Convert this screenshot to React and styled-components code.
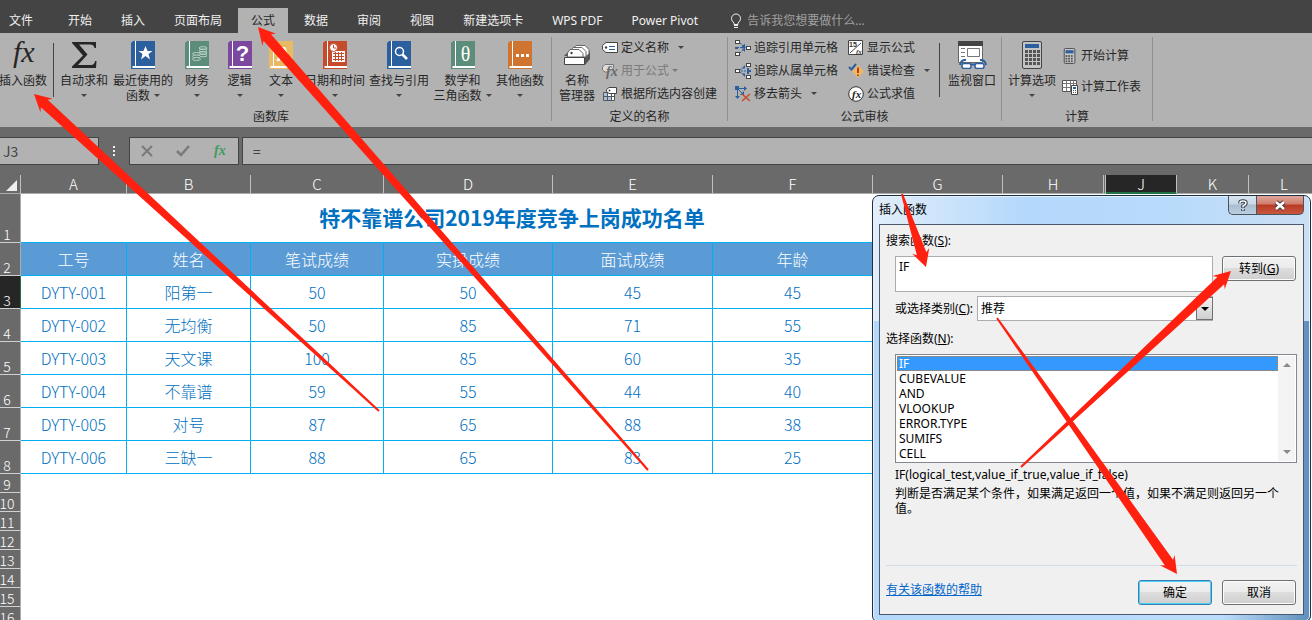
import React, { useState } from "react";
import styled, { createGlobalStyle, css } from "styled-components";

const GlobalStyle = createGlobalStyle`
  * {
    box-sizing: border-box;
  }

  html, body, #root {
    height: 100%;
  }

  body {
    margin: 0;
    overflow: hidden;
    background: #fff;
    font-family: "Noto Sans", "Noto Sans CJK SC", sans-serif;
    font-size: 12px;
    color: #262626;
  }

  button, input, textarea, select {
    margin: 0;
    font: inherit;
    color: inherit;
  }
`;

const Page = styled.div`
  position: relative;
  display: flex;
  flex-direction: column;
  height: 100%;
  overflow: hidden;
`;

/* ---------- tabs ---------- */

const TabBar = styled.nav`
  display: flex;
  align-items: flex-end;
  gap: 3px;
  height: 33px;
  flex: none;
  background: #444;
`;

const Tab = styled.button`
  height: 25px;
  padding: 0 13px;
  border: 0;
  line-height: 21px;
  white-space: nowrap;
  color: ${(p) => (p.$active ? "#262626" : "#f0f0f0")};
  background: ${(p) => (p.$active ? "#b2b2b2" : "transparent")};
`;

const FileTab = styled(Tab)`
  padding: 0 19px 0 9px;
`;

const TellMe = styled.label`
  display: flex;
  align-items: center;
  gap: 5px;
  height: 25px;
  margin-left: 16px;
`;

const TellInput = styled.input`
  width: 160px;
  padding: 0;
  border: 0;
  outline: 0;
  background: transparent;
  color: #f0f0f0;

  &::placeholder {
    color: #a0a0a0;
    opacity: 1;
  }
`;

/* ---------- ribbon ---------- */

const RibbonBar = styled.div`
  display: flex;
  flex: none;
  height: 94px;
  padding: 4px 0 6px;
  background: #b2b2b2;
`;

const Group = styled.section`
  display: flex;
  flex-direction: column;
  flex: none;
  border-right: 1px solid #8f8f8f;
`;

const GroupBody = styled.div`
  display: flex;
  flex: 1;
  padding-right: ${(p) => p.$right || 0}px;
`;

const GroupLabel = styled.div`
  height: 12px;
  padding-right: ${(p) => p.$right || 0}px;
  line-height: 16px;
  text-align: center;
`;

const Divider = styled.div`
  flex: none;
  width: 1px;
  height: 54px;
  margin: 6px 3px 0 ${(p) => p.$before || 0}px;
  background: #444;
`;

const BigButton = styled.button`
  display: flex;
  flex-direction: column;
  align-items: center;
  flex: none;
  width: ${(p) => p.$width}px;
  padding: 4px 0 0;
  border: 0;
  background: transparent;
  line-height: 15px;
  white-space: nowrap;

  svg {
    flex: none;
    margin-bottom: 4px;
  }
`;

const BigLine = styled.span`
  display: flex;
  align-items: center;
  gap: 4px;
  height: 15px;
`;

const Caret = styled.i`
  border: 3px solid transparent;
  border-top-color: #444;
  border-bottom: 0;
`;

const SmallColumn = styled.div`
  display: flex;
  flex-direction: column;
  margin-top: -1px;
  padding-left: ${(p) => p.$left || 0}px;
  padding-top: ${(p) => p.$top || 0}px;
  width: ${(p) => p.$width}px;
`;

const SmallButton = styled.button`
  display: flex;
  align-items: center;
  gap: 3px;
  height: ${(p) => p.$height || 23}px;
  padding: 0;
  border: 0;
  background: transparent;
  line-height: 16px;
  white-space: nowrap;
  color: ${(p) => (p.disabled ? "#7a7a7a" : "#262626")};

  svg {
    flex: none;
  }

  ${Caret} {
    margin-left: ${(p) => (p.disabled ? 0 : 6)}px;
    border-top-color: ${(p) => (p.disabled ? "#7a7a7a" : "#444")};
  }
`;

/* ---------- formula bar ---------- */

const FormulaBar = styled.div`
  display: flex;
  flex: none;
  height: 48px;
  padding: 10px 0;
  background: #6a6a6a;
`;

const fieldBox = css`
  border: 1px solid #444;
  background: #b2b2b2;
  font-family: "Noto Sans CJK SC", sans-serif;
  font-size: 14px;
  color: #444;
  outline: 0;
`;

const NameBox = styled.input`
  ${fieldBox}
  width: 99px;
  padding: 0 3px;
  border-left: 0;
`;

const Dots = styled.div`
  display: flex;
  flex-direction: column;
  align-items: center;
  justify-content: center;
  gap: 2px;
  width: 30px;

  i {
    width: 2px;
    height: 2px;
    background: #f0f0f0;
  }
`;

const FormulaTools = styled.div`
  ${fieldBox}
  display: flex;
  align-items: center;
  justify-content: space-around;
  width: 110px;
  margin-right: 3px;
`;

const ToolButton = styled.button`
  display: flex;
  padding: 0;
  border: 0;
  background: transparent;
`;

const FormulaInput = styled.input`
  ${fieldBox}
  flex: 1;
  min-width: 0;
  padding: 0 10px;
  border-right: 0;
`;

/* ---------- sheet ---------- */

const SheetArea = styled.main`
  position: relative;
  flex: 1;
  min-height: 0;
  overflow: hidden;
  background: #fff;
`;

const Sheet = styled.table`
  table-layout: fixed;
  width: 1320px;
  border-collapse: separate;
  border-spacing: 0;
  font-family: "Noto Sans CJK SC", sans-serif;
  font-weight: 300;
  font-size: 16px;
  line-height: 16px;
  white-space: nowrap;
`;

const ColHead = styled.th`
  height: 19px;
  padding: 0;
  font-size: 15px;
  font-weight: 300;
  color: #fff;
  background: ${(p) => (p.$selected ? "#262626" : "#6a6a6a")};
  border-right: 1px solid #c0c0c0;
  border-bottom: 1px solid ${(p) => (p.$selected ? "#217346" : "#ababab")};
  box-shadow: ${(p) => (p.$selected ? "inset 0 -1px #217346" : "none")};
`;

const Corner = styled(ColHead)`
  vertical-align: bottom;

  svg {
    display: block;
    margin: 0 3px 2px auto;
  }
`;

const RowHead = styled.th`
  height: ${(p) => p.$height}px;
  padding: 0;
  vertical-align: bottom;
  font-size: 14px;
  font-weight: 300;
  color: #fff;
  background: ${(p) => (p.$selected ? "#262626" : "#6a6a6a")};
  border-right: 1px solid ${(p) => (p.$selected ? "#217346" : "#ababab")};
  border-bottom: 1px solid #d0d0d0;
`;

const RowNumber = styled.span`
  display: flex;
  justify-content: center;
  width: 14px;
`;

const TitleCell = styled.td`
  padding: 0 0 2px;
  text-align: center;
  font-size: 21px;
  font-weight: 700;
  color: #0070c0;
  border-bottom: 1px solid #00b0f0;
`;

const Cell = styled.td`
  padding: 0;
  text-align: center;
  color: ${(p) => (p.$head ? "#fff" : "#0070c0")};
  background: ${(p) => (p.$head ? "#5b9bd5" : "#fff")};
  border-right: 1px solid #00b0f0;
  border-bottom: 1px solid #00b0f0;
`;

/* ---------- dialog ---------- */

const DialogFrame = styled.form`
  position: absolute;
  top: 195px;
  right: 1px;
  z-index: 2;
  display: flex;
  flex-direction: column;
  width: 439px;
  padding: 0 6px 6px;
  border: 1px solid #1f2e40;
  border-radius: 7px 7px 6px 6px;
  background:
    linear-gradient(90deg, #e2eefa 0, #b4d8fb 35%, #b9dbfb 70%, #cbdff2 100%) top / 100% 125px no-repeat,
    linear-gradient(90deg, #b4d8fb 0, #bcdcfb 80%, #5f8fbd 100%);
  box-shadow: inset 0 0 0 1px #e4f2ff;
  color: #000;
`;

const TitleBar = styled.header`
  display: flex;
  justify-content: space-between;
  height: 28px;
`;

const DialogTitle = styled.h1`
  margin: 0;
  font-size: 12px;
  font-weight: 400;
  line-height: 28px;
`;

const WindowButtons = styled.div`
  display: flex;
  height: 19px;
`;

const WindowButton = styled.button`
  display: flex;
  align-items: center;
  justify-content: center;
  width: ${(p) => (p.$close ? 48 : 28)}px;
  padding: 0;
  border: 1px solid #4a5560;
  border-top: 0;
  border-radius: ${(p) => (p.$close ? "0 0 5px 0" : "0 0 0 5px")};
  border-right-width: ${(p) => (p.$close ? 1 : 0)}px;
  background: ${(p) =>
    p.$close
      ? "linear-gradient(#dfa79b 0, #cf7d6c 45%, #b93a23 50%, #c9573e 100%)"
      : "linear-gradient(#d8e4f0 0, #c8d8e8 45%, #a9bdd1 50%, #bccfe2 100%)"};
`;

const DialogBody = styled.div`
  display: flex;
  flex-direction: column;
  height: 391px;
  padding: 8px 6px 0;
  border: 1px solid #4a5a6c;
  background: #f0f0f0;
`;

const FieldLabel = styled.label`
  display: block;
  line-height: 16px;
`;

const SearchRow = styled.div`
  display: flex;
  align-items: flex-start;
  gap: 9px;
  margin: 7px 0 4px;
  padding: 0 1px 0 9px;
`;

const SearchText = styled.textarea`
  flex: 1;
  height: 36px;
  padding: 2px 3px;
  border: 1px solid #abadb3;
  background: #fff;
  line-height: 16px;
  outline: 0;
  resize: none;
`;

const DialogButton = styled.button`
  width: 74px;
  height: 25px;
  padding: 0;
  border: 1px solid ${(p) => (p.$primary ? "#3c7fb1" : "#707070")};
  border-radius: 3px;
  background: linear-gradient(#f2f2f2 0, #ebebeb 49%, #ddd 50%, #cfcfcf 100%);
  box-shadow: ${(p) => (p.$primary ? "inset 0 0 0 1px #46d0f4" : "inset 0 0 0 1px #fcfcfc")};
  line-height: 21px;
`;

const CategoryRow = styled.div`
  display: flex;
  align-items: center;
  gap: 4px;
  padding: 0 84px 0 9px;
`;

const SelectWrap = styled.div`
  position: relative;
  flex: 1;
`;

const CategorySelect = styled.select`
  display: block;
  width: 100%;
  height: 25px;
  padding: 0 3px;
  appearance: none;
  border: 1px solid #abadb3;
  border-radius: 0;
  background: #fff;
  outline: 0;
`;

const SelectArrow = styled.span`
  position: absolute;
  top: 1px;
  right: 0;
  bottom: 1px;
  display: flex;
  align-items: center;
  justify-content: center;
  width: 17px;
  border: 1px solid #707070;
  background: linear-gradient(#f2f2f2, #cfcfcf);
  pointer-events: none;

  ${Caret} {
    border-width: 4px 4px 0;
    border-top-color: #000;
  }
`;

const ListCaption = styled.div`
  padding-top: 10px;
  line-height: 16px;
`;

const ListFrame = styled.div`
  display: flex;
  height: 109px;
  margin: 7px 0 4px 9px;
  padding: 1px;
  border: 1px solid #828790;
  background: #fff;
`;

const FunctionList = styled.ul`
  flex: 1;
  margin: 0;
  padding: 0;
  list-style: none;
`;

const FunctionItem = styled.li`
  height: 15px;
  padding-left: 1px;
  line-height: 13px;
  border: 1px dotted ${(p) => (p.$selected ? "#d87a20" : "transparent")};
  background: ${(p) => (p.$selected ? "#39f" : "#fff")};
  color: ${(p) => (p.$selected ? "#fff" : "#000")};
`;

const ScrollTrack = styled.div`
  display: flex;
  flex-direction: column;
  align-items: center;
  justify-content: space-between;
  width: 17px;
  padding: 7px 0;
  background: #f4f4f4;
`;

const ScrollArrow = styled.i`
  border: 4px solid transparent;
  ${(p) => (p.$up ? "border-top: 0; border-bottom-color: #8a8a8a;" : "border-bottom: 0; border-top-color: #8a8a8a;")}
`;

const Description = styled.div`
  flex: 1;
  padding: 0 9px;
  line-height: 15px;

  p {
    margin: 0 0 4px;
  }
`;

const DialogFooter = styled.footer`
  display: flex;
  align-items: flex-start;
  gap: 10px;
  height: 49px;
  padding: 14px 1px 0 0;
  border-top: 1px solid #d0dce8;
`;

const HelpLink = styled.a`
  margin-right: auto;
  line-height: 20px;
  color: #06c;
`;

const ArrowLayer = styled.svg`
  position: absolute;
  top: 0;
  left: 0;
  z-index: 3;
  pointer-events: none;
`;

/* ---------- icons ---------- */

const SERIF = "Liberation Serif, serif";

const Book = ({ color, children }) => (
  <svg width="24" height="28" viewBox="0 0 24 28">
    <path d="M2 0H24V28H0V2Z" fill={color} />
    <path d="M4.500 0V25" stroke="#fff" />
    <path d="M1.500 26H24" stroke="#fff" strokeWidth="2" />
    {children}
  </svg>
);

const BookText = ({ children, size, serif }) => (
  <text
    x="14.500"
    y="20"
    textAnchor="middle"
    fontSize={size || 20}
    fontWeight={serif ? 400 : 700}
    fontFamily={serif ? SERIF : "Liberation Sans, sans-serif"}
    fill="#fff"
  >
    {children}
  </text>
);

const FxIcon = () => (
  <svg width="28" height="28" viewBox="0 0 28 28">
    <text x="4" y="21" fontFamily={SERIF} fontStyle="italic" fontSize="30" fill="#262626">fx</text>
  </svg>
);

const SumIcon = () => (
  <svg width="26" height="28" viewBox="0 0 26 28">
    <path d="M1 1H25V7H23.500Q23 3.500 19 3.500H8L16.500 13.500L7 24H20Q23.500 24 24 20H25.500L25 27H1V25.500L12 14.500L1 2Z" fill="#262626" />
  </svg>
);

const Coins = () => (
  <g fill="none" stroke="#b9cfc5">
    {[7, 9.5, 12, 14.5].map((y) => <ellipse key={y} cx="18" cy={y} rx="4" ry="1.300" />)}
    {[13, 15.5, 18].map((y) => <ellipse key={y} cx="11.500" cy={y} rx="4" ry="1.500" fill="#5b8d7a" />)}
  </g>
);

const Calendar = () => (
  <g>
    <path d="M9 10H22V21H9Z" fill="#fff" />
    <path d="M10 12.500H21M10 15.500H21M10 18.500H21M12.500 11V20M15.500 11V20M18.500 11V20" stroke="#c44b2b" />
    <circle cx="10.500" cy="6.500" r="4" fill="#fff" stroke="#c44b2b" />
    <path d="M10.500 4V7H13" fill="none" stroke="#c44b2b" />
  </g>
);

const NameManagerIcon = () => (
  <svg width="28" height="28" viewBox="0 0 28 28">
    <path d="M21 16L27 10V18L22 24H21ZM1 15L5 11V15Z" fill="#555" />
    <path d="M11 7L13 4.500H22L26 8.500V13L22 16Z" fill="#fff" stroke="#666" />
    <path d="M8 9L10 6.500H19L23 10.500V16H11Z" fill="#fff" stroke="#666" />
    <path d="M4.500 16V12L7 8.500H16L20 12.500V16Z" fill="#fff" stroke="#666" />
    <path d="M1.500 16.500H21.500V23.500H1.500Z" fill="#fff" stroke="#444" />
    <circle cx="8.500" cy="12" r="1.200" fill="#444" />
  </svg>
);

const DefineIcon = () => (
  <svg width="16" height="16" viewBox="0 0 16 16">
    <path d="M4 2.500H15.500V12.500H4L.5 9.500V5.500Z" fill="#fff" stroke="#444" />
    <circle cx="4" cy="7.500" r="1.200" fill="#444" />
    <path d="M7 6.500H13M7 9.500H13" stroke="#2b5f9e" />
  </svg>
);

const UseIcon = () => (
  <svg width="16" height="16" viewBox="0 0 16 16">
    <path d="M3 1.500H11.500V5L6 9H3L.5 7V4Z" fill="#ddd" stroke="#777" />
    <text x="4" y="13" fontFamily={SERIF} fontStyle="italic" fontWeight="700" fontSize="14" fill="#6a6a6a">fx</text>
  </svg>
);

const CreateIcon = () => (
  <svg width="16" height="16" viewBox="0 0 16 16">
    <path d="M1.500 6.500H12.500V14.500H1.500Z" fill="#fff" stroke="#555" />
    <path d="M2 7H5V14H2ZM6 11H9V14H6Z" fill="#a9c4e2" />
    <path d="M1 10.500H13M5.500 7V14M9.500 7V14" stroke="#555" />
    <path d="M7 1.500H14.500V7.500H7L4.500 5.500V3.500Z" fill="#fff" stroke="#444" />
    <circle cx="7.500" cy="4.500" r="1" fill="#444" />
  </svg>
);

const smallBox = (x, y) => (
  <rect key={`${x}-${y}`} x={x + 0.5} y={y + 0.5} width="4" height="3" fill="#fff" stroke="#444" />
);

const PrecedentIcon = () => (
  <svg width="16" height="16" viewBox="0 0 16 16">
    <path d="M5 3L9 6M2 7.500H9M5 13L9 9" stroke="#2b5f9e" strokeDasharray="2 1" />
    <path d="M10 3.500V7H6.500ZM7 5L11 7.500L7 10ZM10 12V8.500H6.500ZM0 7H3V9H0Z" fill="#2b5f9e" />
    {smallBox(0, 0)}{smallBox(11, 6)}{smallBox(0, 12)}
  </svg>
);

const DependentIcon = () => (
  <svg width="16" height="16" viewBox="0 0 16 16">
    <path d="M5 7L10 3M6 8H12M5 9L10 13" stroke="#2b5f9e" strokeDasharray="2 1" />
    <path d="M10 2V5.500H7ZM12 5V11H14V9H16V7H14V5ZM10 14V10.500H7Z" fill="#2b5f9e" />
    {smallBox(0, 6)}{smallBox(11, 0)}{smallBox(11, 12)}
  </svg>
);

const RemoveIcon = () => (
  <svg width="16" height="16" viewBox="0 0 16 16">
    <path d="M2.500 2.500H11M2.500 2.500V12M2.500 2.500L8 8" stroke="#2b5f9e" />
    <path d="M9 0L12 2.500L9 5ZM0 10H5L2.500 13ZM9 5V9H5ZM0 0H4V4H0Z" fill="#2b5f9e" />
    <path d="M7 8L15 15M15 8L7 15" stroke="#c8492b" strokeWidth="1.500" />
  </svg>
);

const ShowFormulaIcon = () => (
  <svg width="16" height="16" viewBox="0 0 16 16">
    <path d="M.5.5H14.500V14.500H.5Z" fill="#fff" stroke="#444" />
    <path d="M2 13L13 3" stroke="#444" />
    <text x="1" y="7" fontFamily="Liberation Sans, sans-serif" fontWeight="700" fontSize="7" fill="#333">15</text>
    <text x="8" y="14" fontFamily={SERIF} fontStyle="italic" fontWeight="700" fontSize="7" fill="#333">fx</text>
  </svg>
);

const ErrorCheckIcon = () => (
  <svg width="16" height="16" viewBox="0 0 16 16">
    <path d="M10 2L16 8.500L10 15L4 8.500Z" fill="#e9ba63" />
    <path d="M10 4.500V10M10 11.500V13" stroke="#c8391f" strokeWidth="2" />
    <path d="M1 4L3.500 6.500L8 1" fill="none" stroke="#2b5f9e" strokeWidth="2" />
  </svg>
);

const EvaluateIcon = () => (
  <svg width="16" height="16" viewBox="0 0 16 16">
    <circle cx="8" cy="8" r="7.300" fill="#fff" stroke="#333" />
    <text x="4" y="11.500" fontFamily={SERIF} fontStyle="italic" fontWeight="700" fontSize="11" fill="#222">fx</text>
  </svg>
);

const WatchIcon = () => (
  <svg width="30" height="28" viewBox="0 0 30 28">
    <path d="M1.500.5H25.500V21.500H1.500Z" fill="#fff" stroke="#666" />
    <path d="M1 0H26V5H1Z" fill="#444" />
    <path d="M4 7.500H8M4 11.500H8M4 15.500H8M10.500 7.500H22.500V15.500H10.500Z" fill="none" stroke="#777" />
    <path d="M3 24Q4 18.500 9 19M29 24Q28 18.500 23 19" fill="none" stroke="#2b5f9e" strokeWidth="2" />
    <path d="M14 23.500H18" stroke="#2b5f9e" strokeWidth="2" />
    <rect x="5" y="22.500" width="9" height="5" rx="2" fill="#fff" stroke="#2b5f9e" strokeWidth="1.500" />
    <rect x="18" y="22.500" width="9" height="5" rx="2" fill="#fff" stroke="#2b5f9e" strokeWidth="1.500" />
  </svg>
);

const CalcIcon = ({ small }) => {
  const cols = small ? [3, 6, 9] : [3, 7, 11, 15];
  const rows = small ? [8, 11, 14] : [9, 13, 17, 21];
  return (
    <svg width={small ? 16 : 20} height={small ? 16 : 28} viewBox={small ? "-2 0 18 18" : "0 0 20 28"}>
      <rect x=".5" y=".5" width={small ? 12 : 19} height={small ? 17 : 27} rx="1.500" fill="#c4c4c4" stroke="#444" />
      <path d={small ? "M2 2.500H11V6H2Z" : "M3 3H17V7H3Z"} fill="#2b5f9e" />
      {rows.map((y) => cols.map((x) => (
        <rect key={`${x}-${y}`} x={x - (small ? 1 : 0)} y={y} width={small ? 2 : 3} height={small ? 2 : 3} fill="#555" />
      )))}
    </svg>
  );
};

const CalcSheetIcon = () => (
  <svg width="16" height="16" viewBox="0 0 16 16">
    <path d="M.5 1.500H14.500V12.500H.5Z" fill="#fff" stroke="#555" />
    <path d="M.5 4.500H14.500M.5 8.500H14.500M4.500 1.500V12.500M8.500 1.500V12.500M11.500 1.500V12.500" stroke="#777" />
    <path d="M9.500 6.500H15.500V15.500H9.500Z" fill="#fff" stroke="#444" />
    <path d="M11 8H14V10H11Z" fill="#2b5f9e" />
    <path d="M11 11.500H14M11 13.500H14" stroke="#555" strokeDasharray="1 1" />
  </svg>
);

const BulbIcon = () => (
  <svg width="12" height="16" viewBox="0 0 12 16" fill="none" stroke="#f0f0f0">
    <path d="M4 11.500V10Q1.500 8 1.500 5.500A4.500 4.500 0 0 1 10.500 5.500Q10.500 8 8 10V11.500Z" />
    <path d="M4 12.500H8M4 14.500H8" />
  </svg>
);

/* ---------- data ---------- */

const tabs = ["开始", "插入", "页面布局", "公式", "数据", "审阅", "视图", "新建选项卡", "WPS PDF", "Power Pivot"];

const library = [
  { width: 54, lines: ["自动求和"], icon: <SumIcon /> },
  { width: 64, lines: ["最近使用的", "函数"], icon: <Book color="#2b5f9e"><path d="M14.500 5L16.500 10H21.500L17.500 13L19 18.500L14.500 15L10 18.500L11.500 13L7.500 10H12.500Z" fill="#fff" /></Book> },
  { width: 44, lines: ["财务"], icon: <Book color="#5b8d7a"><Coins /></Book> },
  { width: 41, lines: ["逻辑"], icon: <Book color="#7c489f"><BookText size={22}>?</BookText></Book> },
  { width: 42, lines: ["文本"], icon: <Book color="#e9ba63"><BookText>A</BookText></Book> },
  { width: 66, lines: ["日期和时间"], icon: <Book color="#c44b2b"><Calendar /></Book> },
  { width: 62, lines: ["查找与引用"], icon: <Book color="#2b5f9e"><circle cx="12.500" cy="10.500" r="4" fill="none" stroke="#fff" strokeWidth="1.500" /><path d="M15.500 13.500L20 18" stroke="#fff" strokeWidth="2.500" /></Book> },
  { width: 65, lines: ["数学和", "三角函数"], icon: <Book color="#5b8d7a"><BookText serif>θ</BookText></Book> },
  { width: 50, lines: ["其他函数"], icon: <Book color="#cf7530"><path d="M8 13H11V16H8ZM13 13H16V16H13ZM18 13H21V16H18Z" fill="#fff" /></Book> },
];

const columns = [
  ["A", 106], ["B", 124], ["C", 133], ["D", 169], ["E", 160], ["F", 160],
  ["G", 130], ["H", 101], ["", 2], ["J", 71], ["K", 72], ["L", 71],
];

const header = ["工号", "姓名", "笔试成绩", "实操成绩", "面试成绩", "年龄"];

const people = [
  ["DYTY-001", "阳第一", 50, 50, 45, 45],
  ["DYTY-002", "无均衡", 50, 85, 71, 55],
  ["DYTY-003", "天文课", 100, 85, 60, 35],
  ["DYTY-004", "不靠谱", 59, 55, 44, 40],
  ["DYTY-005", "对号", 87, 65, 88, 38],
  ["DYTY-006", "三缺一", 88, 65, 83, 25],
];

const emptyRows = [9, 10, 11, 12, 13, 14, 15, 16];

const functions = ["IF", "CUBEVALUE", "AND", "VLOOKUP", "ERROR.TYPE", "SUMIFS", "CELL"];

const arrows = [
  { tip: [34, 94], tail: [379, 411] },
  { tip: [258, 27], tail: [648, 470] },
  { tip: [926, 267], tail: [902, 194] },
  { tip: [1177, 574], tail: [997, 318] },
  { tip: [1231, 271], tail: [1021, 467] },
];

// Tapered arrow: wide at the head, almost a point at the tail
const arrowPoints = ({ tip, tail }) => {
  const dx = tail[0] - tip[0];
  const dy = tail[1] - tip[1];
  const len = Math.hypot(dx, dy);
  const ux = dx / len;
  const uy = dy / len;
  const at = (along, side) => `${tip[0] + ux * along - uy * side},${tip[1] + uy * along + ux * side}`;
  return [at(0, 0), at(17, 9), at(14, 5), at(len, 1), at(len, -1), at(14, -5), at(17, -9)].join(" ");
};

/* ---------- components ---------- */

const BigItem = ({ width, lines, icon, caret = true }) => (
  <BigButton $width={width} type="button">
    {icon}
    {lines.map((line, i) => (
      <BigLine key={line}>
        {line}
        {caret && i === 1 && <Caret />}
      </BigLine>
    ))}
    {caret && lines.length === 1 && <BigLine><Caret /></BigLine>}
  </BigButton>
);

const SmallItem = ({ icon, text, caret, disabled, height }) => (
  <SmallButton type="button" disabled={disabled} $height={height}>
    {icon}
    {text}
    {caret && <Caret />}
  </SmallButton>
);

const Ribbon = () => (
  <RibbonBar>
    <Group>
      <GroupBody $right={6}>
        <BigItem width={46} lines={["插入函数"]} icon={<FxIcon />} caret={false} />
        <Divider $before={7} />
        {library.map((item) => <BigItem key={item.lines[0]} {...item} />)}
      </GroupBody>
      <GroupLabel $right={9}>函数库</GroupLabel>
    </Group>
    <Group>
      <GroupBody>
        <BigItem width={50} lines={["名称", "管理器"]} icon={<NameManagerIcon />} caret={false} />
        <SmallColumn $width={125}>
          <SmallItem icon={<DefineIcon />} text="定义名称" caret />
          <SmallItem icon={<UseIcon />} text="用于公式" caret disabled />
          <SmallItem icon={<CreateIcon />} text="根据所选内容创建" />
        </SmallColumn>
      </GroupBody>
      <GroupLabel>定义的名称</GroupLabel>
    </Group>
    <Group>
      <GroupBody>
        <SmallColumn $width={120} $left={7}>
          <SmallItem icon={<PrecedentIcon />} text="追踪引用单元格" />
          <SmallItem icon={<DependentIcon />} text="追踪从属单元格" />
          <SmallItem icon={<RemoveIcon />} text="移去箭头" caret />
        </SmallColumn>
        <SmallColumn $width={91}>
          <SmallItem icon={<ShowFormulaIcon />} text="显示公式" />
          <SmallItem icon={<ErrorCheckIcon />} text="错误检查" caret />
          <SmallItem icon={<EvaluateIcon />} text="公式求值" />
        </SmallColumn>
        <Divider />
        <BigItem width={58} lines={["监视窗口"]} icon={<WatchIcon />} caret={false} />
      </GroupBody>
      <GroupLabel>公式审核</GroupLabel>
    </Group>
    <Group>
      <GroupBody>
        <BigItem width={60} lines={["计算选项"]} icon={<CalcIcon />} />
        <SmallColumn $width={90} $top={4}>
          <SmallItem icon={<CalcIcon small />} text="开始计算" height={31} />
          <SmallItem icon={<CalcSheetIcon />} text="计算工作表" height={31} />
        </SmallColumn>
      </GroupBody>
      <GroupLabel>计算</GroupLabel>
    </Group>
  </RibbonBar>
);

const RowHeader = ({ number, height, selected }) => (
  <RowHead scope="row" $height={height} $selected={selected}>
    <RowNumber>{number}</RowNumber>
  </RowHead>
);

const DataSheet = () => (
  <Sheet>
    <colgroup>
      <col width="21" />
      {columns.map(([name, width]) => <col key={name} width={width} />)}
    </colgroup>
    <thead>
      <tr>
        <Corner>
          <svg width="11" height="11" viewBox="0 0 11 11"><path d="M11 0V11H0Z" fill="#f0f0f0" /></svg>
        </Corner>
        {columns.map(([name]) => (
          <ColHead key={name} scope="col" $selected={name === "J"}>{name}</ColHead>
        ))}
      </tr>
    </thead>
    <tbody>
      <tr>
        <RowHeader number={1} height={49} />
        <TitleCell colSpan={7}>特不靠谱公司2019年度竞争上岗成功名单</TitleCell>
      </tr>
      <tr>
        <RowHeader number={2} height={33} />
        {header.map((text) => <Cell key={text} $head>{text}</Cell>)}
        <Cell $head />
      </tr>
      {people.map((person, i) => (
        <tr key={person[0]}>
          <RowHeader number={i + 3} height={33} selected={i === 0} />
          {person.map((value, j) => <Cell key={j}>{value}</Cell>)}
          <Cell />
        </tr>
      ))}
      {emptyRows.map((number) => (
        <tr key={number}>
          <RowHeader number={number} height={19} />
        </tr>
      ))}
    </tbody>
  </Sheet>
);

const InsertFunctionDialog = () => {
  const [selected, setSelected] = useState("IF");

  return (
    <DialogFrame onSubmit={(e) => e.preventDefault()}>
      <TitleBar>
        <DialogTitle>插入函数</DialogTitle>
        <WindowButtons>
          <WindowButton type="button" aria-label="帮助">
            <svg width="10" height="13" viewBox="0 0 10 13" fill="none">
              <path d="M2 4.500V3.500Q2 2 5 2Q8 2 8 4Q8 5.500 5 7V9M5 10V12" stroke="#333f4c" strokeWidth="3.500" />
              <path d="M2 4.500V3.500Q2 2 5 2Q8 2 8 4Q8 5.500 5 7V8.500M5 10V11.500" stroke="#fff" strokeWidth="1.500" />
            </svg>
          </WindowButton>
          <WindowButton type="button" aria-label="关闭" $close>
            <svg width="12" height="11" viewBox="0 0 12 11">
              <path d="M2 2L10 9M10 2L2 9" stroke="#4d3a40" strokeWidth="4.500" />
              <path d="M2 2L10 9M10 2L2 9" stroke="#fff" strokeWidth="2.500" />
            </svg>
          </WindowButton>
        </WindowButtons>
      </TitleBar>
      <DialogBody>
        <FieldLabel htmlFor="search">搜索函数(<u>S</u>):</FieldLabel>
        <SearchRow>
          <SearchText id="search" defaultValue="IF" spellCheck={false} />
          <DialogButton type="button">转到(<u>G</u>)</DialogButton>
        </SearchRow>
        <CategoryRow>
          <FieldLabel htmlFor="category">或选择类别(<u>C</u>):</FieldLabel>
          <SelectWrap>
            <CategorySelect id="category" defaultValue="推荐">
              <option>推荐</option>
            </CategorySelect>
            <SelectArrow><Caret /></SelectArrow>
          </SelectWrap>
        </CategoryRow>
        <ListCaption id="function-label">选择函数(<u>N</u>):</ListCaption>
        <ListFrame>
          <FunctionList role="listbox" aria-labelledby="function-label" tabIndex={0}>
            {functions.map((name) => (
              <FunctionItem
                key={name}
                role="option"
                aria-selected={name === selected}
                $selected={name === selected}
                onClick={() => setSelected(name)}
              >
                {name}
              </FunctionItem>
            ))}
          </FunctionList>
          <ScrollTrack>
            <ScrollArrow $up />
            <ScrollArrow />
          </ScrollTrack>
        </ListFrame>
        <Description>
          <p>IF(logical_test,value_if_true,value_if_false)</p>
          <p>判断是否满足某个条件，如果满足返回一个值，如果不满足则返回另一个值。</p>
        </Description>
        <DialogFooter>
          <HelpLink href="#help">有关该函数的帮助</HelpLink>
          <DialogButton $primary>确定</DialogButton>
          <DialogButton type="button">取消</DialogButton>
        </DialogFooter>
      </DialogBody>
    </DialogFrame>
  );
};

const App = () => {
  const [activeTab, setActiveTab] = useState("公式");

  return (
    <Page>
      <GlobalStyle />
      <TabBar>
        <FileTab type="button">文件</FileTab>
        {tabs.map((name) => (
          <Tab key={name} type="button" $active={name === activeTab} onClick={() => setActiveTab(name)}>
            {name}
          </Tab>
        ))}
        <TellMe>
          <BulbIcon />
          <TellInput placeholder="告诉我您想要做什么..." />
        </TellMe>
      </TabBar>
      <Ribbon />
      <FormulaBar>
        <NameBox aria-label="名称框" defaultValue="J3" />
        <Dots><i /><i /><i /></Dots>
        <FormulaTools>
          <ToolButton type="button" aria-label="取消">
            <svg width="12" height="12" viewBox="0 0 12 12"><path d="M1 1L11 11M11 1L1 11" stroke="#7a7a7a" strokeWidth="2" /></svg>
          </ToolButton>
          <ToolButton type="button" aria-label="输入">
            <svg width="14" height="12" viewBox="0 0 14 12"><path d="M1 6L5 10L13 1" fill="none" stroke="#7a7a7a" strokeWidth="2.500" /></svg>
          </ToolButton>
          <ToolButton type="button" aria-label="插入函数">
            <svg width="14" height="16" viewBox="0 0 14 16">
              <text x="1" y="12" fontFamily={SERIF} fontStyle="italic" fontWeight="700" fontSize="14" fill="#3f9a62">fx</text>
            </svg>
          </ToolButton>
        </FormulaTools>
        <FormulaInput aria-label="编辑栏" defaultValue="=" />
      </FormulaBar>
      <SheetArea>
        <DataSheet />
      </SheetArea>
      <InsertFunctionDialog />
      <ArrowLayer width="1312" height="620" viewBox="0 0 1312 620">
        {arrows.map((arrow) => (
          <polygon key={arrow.tip[0]} points={arrowPoints(arrow)} fill="#ff2010" />
        ))}
      </ArrowLayer>
    </Page>
  );
};

export default App;
